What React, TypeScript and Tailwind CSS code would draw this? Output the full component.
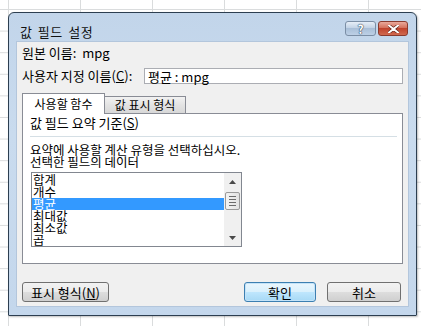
import React from "react";

const font = "font-['Noto_Sans_CJK_KR','Noto_Sans',sans-serif]";

function ScrollArrow({ up }: { up: boolean }) {
  return (
    <svg width="7" height="4" viewBox="0 0 7 4">
      {up ? <path d="M0 4 L3.5 0 L7 4 Z" fill="#4a4a4a" /> : <path d="M0 0 L3.5 4 L7 0 Z" fill="#4a4a4a" />}
    </svg>
  );
}

export default function App() {
  const items = ["합계", "개수", "평균", "최대값", "최소값", "곱"];
  return (
    <div
      className={`w-[421px] h-[326px] overflow-hidden bg-white bg-[linear-gradient(to_right,#dadcdd_1px,transparent_1px),linear-gradient(to_bottom,#dadcdd_1px,transparent_1px)] bg-[size:72px_21.6px] bg-[position:8px_9px] pl-[8px] pt-[12px] ${font} text-[13px] text-black`}
    >
      <div className="w-[409px] h-[304px] rounded-t-[6px] rounded-b-[1px] border border-[#2c3e50] bg-[linear-gradient(to_bottom,#c2d5ea,#c9dbee_40%,#c4d7ec)] flex flex-col shadow-[1px_1px_2px_rgba(0,0,0,0.25)]">
        {/* title bar */}
        <div className="h-[28px] flex items-start pl-[11px] pr-[8px]">
          <span className="mt-[12px] text-[13px] leading-[14px] text-[#111] tracking-[0.5px] [word-spacing:2px]">값 필드 설정</span>
          <div className="ml-auto flex gap-[2px] mt-[8px]">
            <div className="w-[31px] h-[15px] rounded-[3px] border border-[#7b8ea5] bg-[linear-gradient(to_bottom,#e6eef7,#c3d3e6_45%,#a9bfd8_50%,#bdd0e6)] flex items-center justify-center">
              <span className="text-[12px] font-bold leading-none text-white [text-shadow:0_0_1px_#33475f,0_0_1px_#33475f,0_0_1px_#33475f]">?</span>
            </div>
            <div className="w-[30px] h-[15px] rounded-[3px] border border-[#8a3a2e] bg-[linear-gradient(to_bottom,#e9a99b,#d4705c_45%,#c0432d_50%,#d06a50)] flex items-center justify-center">
              <svg width="11" height="8" viewBox="0 0 11 8">
                <path d="M1 0.5 L10 7.5 M10 0.5 L1 7.5" stroke="#5a2018" strokeWidth="3.2" strokeLinecap="round" />
                <path d="M1 0.5 L10 7.5 M10 0.5 L1 7.5" stroke="#ffffff" strokeWidth="2" strokeLinecap="round" />
              </svg>
            </div>
          </div>
        </div>
        {/* client */}
        <div className="mx-[7px] h-[266px] border border-[#b3c6dc] bg-[#f0f0f0] flex flex-col pl-[5px] pr-[6px]">
          <div className="mt-[4px] h-[14px] leading-[14px]">원본 이름:&nbsp; mpg</div>
          <div className="mt-[8px] flex items-center h-[16px]">
            <span className="leading-[14px]">
              사용자 지정 이름(<span className="underline">C</span>):
            </span>
            <div className="ml-auto mr-[-1px] w-[259px] h-[16px] border border-[#abadb3] bg-white flex items-center pl-[3px] leading-none">
              평균 : mpg
            </div>
          </div>
          {/* tabs */}
          <div className="mt-[9px] flex items-end h-[20px] relative z-10 text-[12px]">
            <div className="w-[83px] h-[21px] border border-b-0 border-[#898c95] bg-white flex items-center justify-center mb-[-1px] leading-none">
              사용할 함수
            </div>
            <div className="w-[81px] h-[17px] border border-l-0 border-b-0 border-[#898c95] bg-[linear-gradient(to_bottom,#f2f2f2,#e3e3e3_50%,#d8d8d8)] flex items-center justify-center leading-none">
              값 표시 형식
            </div>
          </div>
          <div className="w-[381px] h-[151px] border border-[#898c95] bg-white flex flex-col pl-[7px] pr-[3px]">
            <div className="mt-[2px] h-[14px] leading-[14px]">
              값 필드 요약 기준(<span className="underline">S</span>)
            </div>
            <div className="mt-[6px] h-px bg-[#d5dfe5] mr-[2px]" />
            <div className="mt-[7px] leading-[12px] text-[12.5px]">
              요약에 사용할 계산 유형을 선택하십시오.
              <br />
              선택한 필드의 데이터
            </div>
            <div className="mt-[4px] ml-[1px] w-[211px] h-[75px] border border-[#828790] bg-white flex">
              <div className="flex-1 pt-[1px] flex flex-col">
                {items.map((it, i) => (
                  <div
                    key={it}
                    className={`h-[12px] text-[12.5px] leading-[12px] pl-[1px] ${i === 2 ? "bg-[#3399ff] text-white" : ""}`}
                  >
                    {it}
                  </div>
                ))}
              </div>
              <div className="w-[17px] bg-[#f0f0f0] flex flex-col items-center">
                <div className="h-[17px] flex items-center justify-center">
                  <ScrollArrow up />
                </div>
                <div className="mt-[2px] w-[15px] h-[18px] rounded-[2px] border border-[#9a9a9a] bg-[linear-gradient(to_right,#f3f3f3,#e2e2e2)] flex flex-col items-center justify-center gap-[2px]">
                  <div className="w-[7px] h-px bg-[#6b6b6b]" />
                  <div className="w-[7px] h-px bg-[#6b6b6b]" />
                  <div className="w-[7px] h-px bg-[#6b6b6b]" />
                  <div className="w-[7px] h-px bg-[#6b6b6b]" />
                </div>
                <div className="mt-auto h-[17px] flex items-center justify-center">
                  <ScrollArrow up={false} />
                </div>
              </div>
            </div>
          </div>
          {/* buttons */}
          <div className="mt-[18px] flex h-[20px]">
            <div className="w-[87px] h-[20px] rounded-[3px] border border-[#707070] bg-[linear-gradient(to_bottom,#f2f2f2,#ebebeb_50%,#dddddd_51%,#cfcfcf)] flex items-center justify-center leading-none">
              표시 형식(<span className="underline">N</span>)
            </div>
            <div className="ml-auto w-[72px] h-[20px] rounded-[3px] border border-[#3c7fb1] bg-[linear-gradient(to_bottom,#eaf6fd,#d9f0fc_50%,#bee6fd_51%,#a7d9f5)] shadow-[inset_0_0_0_1px_#c4e3f8] flex items-center justify-center leading-none">
              확인
            </div>
            <div className="ml-[11px] mr-[1px] w-[74px] h-[20px] rounded-[3px] border border-[#707070] bg-[linear-gradient(to_bottom,#f2f2f2,#ebebeb_50%,#dddddd_51%,#cfcfcf)] flex items-center justify-center leading-none">
              취소
            </div>
          </div>
        </div>
      </div>
    </div>
  );
}
